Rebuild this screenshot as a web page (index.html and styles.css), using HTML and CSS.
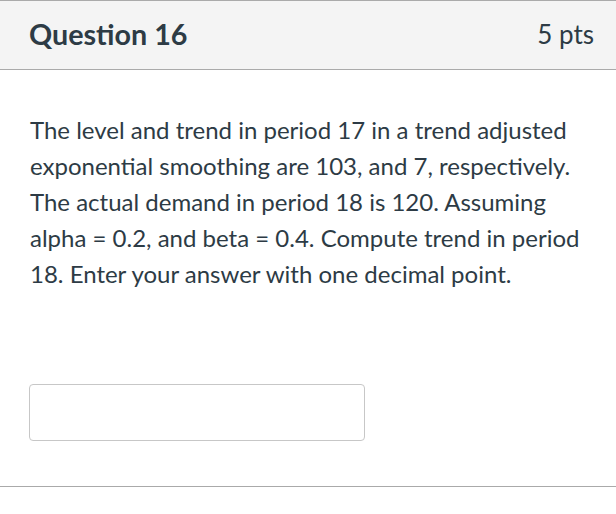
FILE: index.html
```html
<!DOCTYPE html>
<html>
<head>
<meta charset="utf-8">
<link rel="stylesheet" href="styles.css">
</head>
<body>
<div class="question">
  <div class="header">
    <h2 class="title">Question 16</h2>
    <div class="points">5 pts</div>
  </div>
  <div class="content">
    <p class="text">The level and trend in period 17 in a trend adjusted exponential smoothing are 103, and 7, respectively. The actual demand in period 18 is 120. Assuming alpha = 0.2, and beta = 0.4. Compute trend in period 18. Enter your answer with one decimal point.</p>
    <div class="answer"><input class="answer-input" type="text"></div>
  </div>
  <div class="footer"></div>
</div>
</body>
</html>
```
FILE: styles.css
```css
html, body {
  margin: 0;
  padding: 0;
  background: #fff;
}
body {
  font-family: Lato, "Liberation Sans", sans-serif;
  color: #2d3b45;
  width: 616px;
}
.header {
  display: flex;
  justify-content: space-between;
  align-items: center;
  background: #f4f4f4;
  border-top: 1px solid #aaaaaa;
  border-bottom: 1px solid #aaaaaa;
  height: 70px;
  padding: 0 22px 2px 29px;
  box-sizing: border-box;
}
.title {
  margin: 0;
  font-size: 28.7px;
  font-weight: 700;
}
.points {
  font-size: 26px;
  font-weight: 400;
}
.content {
  padding: 42px 30px 0 30px;
  height: 416px;
  box-sizing: border-box;
}
.text {
  margin: 0;
  font-size: 24px;
  line-height: 36px;
  width: 556px;
}
.answer {
  margin-top: 92px;
}
.answer-input {
  display: block;
  width: 336px;
  height: 57px;
  box-sizing: border-box;
  border: 1px solid #c7c7c7;
  border-radius: 4px;
  margin: 0 0 0 -1px;
  background: #fff;
}
.footer {
  border-top: 1px solid #aaaaaa;
}
```
